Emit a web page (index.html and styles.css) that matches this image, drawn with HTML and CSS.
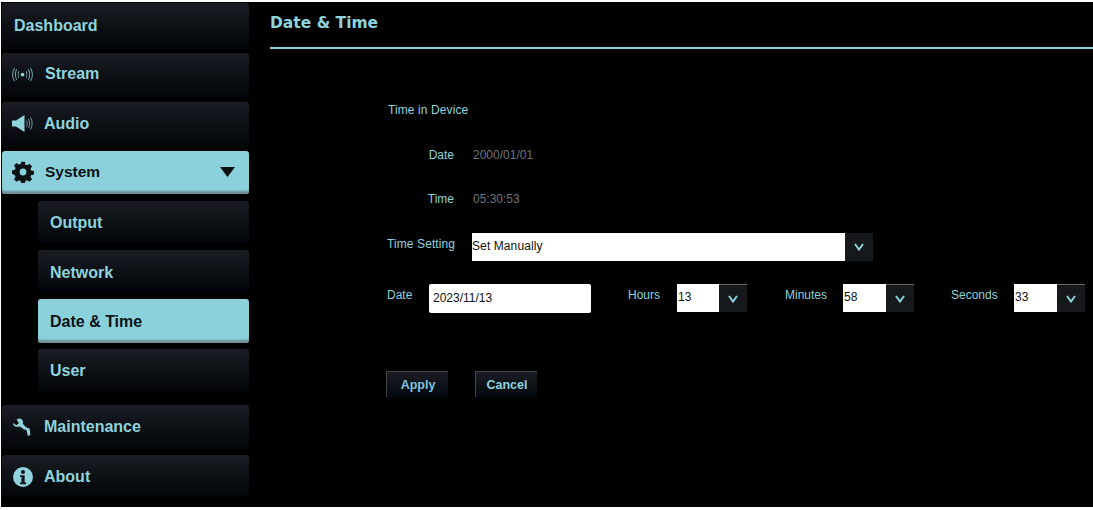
FILE: index.html
```html
<!DOCTYPE html>
<html lang="en">
<head>
<meta charset="utf-8">
<title>Date &amp; Time</title>
<link rel="stylesheet" href="styles.css">
</head>
<body>
<div class="frame">
  <nav class="side">
    <a class="item dash">Dashboard</a>
    <a class="item stream">
      <svg class="ico ico-stream" viewBox="0 0 22 16"><g fill="none" stroke="#6d9fa6" stroke-width="1.100"><path d="M4.800 2.500c-1.800 3.400-1.800 7.600 0 11"/><path d="M2.600 1c-2.800 4.400-2.800 9.600 0 14"/><path d="M7 4.500c-1 2.200-1 4.800 0 7"/><path d="M17.200 2.500c1.800 3.400 1.800 7.600 0 11"/><path d="M19.400 1c2.800 4.400 2.800 9.600 0 14"/><path d="M15 4.500c1 2.200 1 4.800 0 7"/></g><circle cx="11" cy="8" r="2" fill="#8fd3dc"/></svg>
      <span>Stream</span>
    </a>
    <a class="item audio">
      <svg class="ico ico-audio" viewBox="0 0 21 17"><path d="M0 5.500h4L12.500 0v17L4 11.500H0z" fill="#8fd3dc"/><g fill="none" stroke="#6d9fa6" stroke-width="1"><path d="M14.500 5.500c.9 1.900.9 4.100 0 6"/><path d="M16.500 4c1.500 2.800 1.500 6.200 0 9"/><path d="M18.500 2.500c2.100 3.800 2.100 8.200 0 12"/></g></svg>
      <span>Audio</span>
    </a>
    <a class="item on system">
      <svg class="ico ico-gear" viewBox="-1 -1 26 26"><path fill="#0c1114" fill-rule="evenodd" d="M9.800 0h4.400l.6 3.300 2 .8 2.800-1.900 3.100 3.100-1.900 2.800.8 2 3.300.6v4.400l-3.300.6-.8 2 1.900 2.800-3.100 3.100-2.800-1.900-2 .8-.6 3.300H9.800l-.6-3.300-2-.8-2.800 1.900-3.100-3.100 1.900-2.800-.8-2L-.9 14.200V9.800l3.300-.6.8-2-1.900-2.800 3.100-3.100 2.800 1.900 2-.8zM12 8a4 4 0 1 0 0 8 4 4 0 0 0 0-8z"/></svg>
      <span class="grow">System</span>
      <svg class="caret" viewBox="0 0 16 12" preserveAspectRatio="none"><path d="M0 0h16L8 12z" fill="#0c1114"/></svg>
    </a>
    <div class="subs">
      <a class="item sub output">Output</a>
      <a class="item sub network">Network</a>
      <a class="item sub on current">Date &amp; Time</a>
      <a class="item sub user">User</a>
    </div>
    <a class="item maint">
      <svg class="ico ico-wrench" viewBox="0 0 22 22"><path fill="#8fd3dc" d="M0 6.500 3.800 9 6.500 7 4 2.800C6.500.6 10.200 1.500 11 5c.2 1 .1 1.800-.2 2.500l3 3.200c1 1 1.800 1.300 3 1.500 1 .2 1.500.8 1.700 1.800l.5 6-2.800.6-1-5c-.2-.8-.7-1.300-1.500-1.500-1.500-.3-2.600-1-3.700-2.100L7.500 10.500C3.500 11.500 0 10 0 6.500z"/></svg>
      <span>Maintenance</span>
    </a>
    <a class="item about">
      <svg class="ico ico-info" viewBox="0 0 22 22"><circle cx="11" cy="11" r="11" fill="#8fd3dc"/><circle cx="11" cy="5.500" r="2.200" fill="#0a0f14"/><path d="M7.800 9h5v8h1.600v2H7.800v-2h1.600v-6H7.800z" fill="#0a0f14"/></svg>
      <span>About</span>
    </a>
  </nav>
  <main class="main">
    <h1 class="title">Date &amp; Time</h1>
    <form class="form">
      <div class="heading">Time in Device</div>
      <div class="info info-date"><span class="lab">Date</span><span class="val">2000/01/01</span></div>
      <div class="info info-time"><span class="lab">Time</span><span class="val">05:30:53</span></div>
      <div class="row-setting">
        <span class="lab lab-setting">Time Setting</span>
        <div class="select wide"><span class="sel-text">Set Manually</span><span class="arrow"><svg viewBox="0 0 10 8"><path d="M1 1l4 5.500L9 1" fill="none" stroke="#8fd3dc" stroke-width="2"/></svg></span></div>
      </div>
      <div class="row-date">
        <span class="lab lab-date">Date</span>
        <div class="text-box">2023/11/13</div>
        <span class="lab lab-hours">Hours</span>
        <div class="select small hours"><span class="sel-text">13</span><span class="arrow"><svg viewBox="0 0 10 8"><path d="M1 1l4 5.500L9 1" fill="none" stroke="#8fd3dc" stroke-width="2"/></svg></span></div>
        <span class="lab lab-minutes">Minutes</span>
        <div class="select small"><span class="sel-text">58</span><span class="arrow"><svg viewBox="0 0 10 8"><path d="M1 1l4 5.500L9 1" fill="none" stroke="#8fd3dc" stroke-width="2"/></svg></span></div>
        <span class="lab lab-seconds">Seconds</span>
        <div class="select small"><span class="sel-text">33</span><span class="arrow"><svg viewBox="0 0 10 8"><path d="M1 1l4 5.500L9 1" fill="none" stroke="#8fd3dc" stroke-width="2"/></svg></span></div>
      </div>
      <div class="buttons">
        <button type="button" class="btn apply">Apply</button>
        <button type="button" class="btn cancel">Cancel</button>
      </div>
    </form>
  </main>
</div>
</body>
</html>
```
FILE: styles.css
```css
* { box-sizing: border-box; }
html, body { margin: 0; height: 100%; }
body { background: #fff; padding: 2px 0 3px 1px; font-family: "Liberation Sans", Arial, sans-serif; overflow: hidden; }
.frame { display: flex; height: 505px; background: #000; }

.side { width: 248px; flex: none; padding: 1px 0 0 1px; display: flex; flex-direction: column; }
.item {
  display: flex; align-items: center; height: 44px; padding-left: 10px; border-radius: 3px;
  font-size: 16px; font-weight: 700; color: #8fd3dc;
  background: linear-gradient(#1a1e24 0%, #0e1217 45%, #02060b 100%);
}
.ico { flex: none; display: block; }
.dash { height: 46px; padding-left: 12px; }
.stream { margin-top: 4px; height: 44px; padding-bottom: 2px; }
.audio { margin-top: 5px; height: 45px; padding-bottom: 2px; }
.ico-stream { width: 21px; height: 15px; margin-right: 12px; }
.ico-audio { width: 21px; height: 17px; margin-right: 11px; }
.ico-gear { width: 22px; height: 22px; margin-right: 11px; }
.ico-wrench { width: 20px; height: 20px; margin: 0 11px 0 1px; }
.ico-info { width: 20px; height: 20px; margin: 0 11px 0 1px; }
.item.on { color: #0c1114; background: #8bd1db; box-shadow: inset 0 -4px 2px -1px #6f8f96; }
.system { margin-top: 4px; height: 43px; padding-right: 14px; padding-bottom: 2px; font-size: 15.500px; }
.grow { flex: 1; }
.caret { width: 15px; height: 10px; flex: none; }

.subs { padding-left: 36px; display: flex; flex-direction: column; }
.sub { height: 42px; margin-top: 7px; padding-left: 12px; }
.output { padding-top: 2px; }
.network { padding-top: 4px; }
.current { height: 44px; padding-top: 1px; }
.user { margin-top: 6px; padding-top: 2px; }
.maint { margin-top: 14px; }
.about { margin-top: 6px; height: 42px; padding-top: 2px; }

.main { flex: 1; padding-left: 21px; min-width: 0; }
.title {
  margin: 0; height: 47px; padding-top: 12px; border-bottom: 2px solid #8bd1db;
  font: 700 15.500px "DejaVu Sans", sans-serif; color: #8dd3dc;
}
.form { font-size: 12px; color: #8dd3dc; padding-left: 117px; }
.heading { margin-top: 54px; padding-left: 1px; line-height: 14px; letter-spacing: .1px; }
.info { display: flex; margin-top: 31px; line-height: 14px; }
.info-time { margin-top: 30px; }
.lab { display: block; line-height: 14px; }
.val { color: #6e7478; margin-left: 19px; }
.info .lab { width: 67px; text-align: right; }
.row-setting { display: flex; margin-top: 27px; height: 28px; }
.lab-setting { width: 85px; margin-top: 4px; letter-spacing: .1px; }
.select { display: flex; height: 28px; }
.sel-text { flex: 1; background: #fff; color: #111; font-size: 12px; line-height: 26px; letter-spacing: .1px; }
.arrow { background: #15191c; display: flex; align-items: center; justify-content: center; }
.arrow svg { width: 10px; height: 8px; display: block; }
.wide { width: 401px; }
.wide .arrow { width: 28px; }
.small { width: 71px; }
.small.hours { width: 70px; }
.small .arrow { width: 28px; border-top: 1px solid #666; }
.small .sel-text { padding-left: 1px; letter-spacing: 0; }
.row-date { display: flex; margin-top: 23px; height: 29px; }
.lab-date { width: 42px; margin-top: 4px; }
.text-box { width: 162px; height: 29px; background: #fff; border-radius: 2px; color: #111; line-height: 29px; padding-left: 4px; }
.lab-hours { margin: 4px 0 0 37px; width: 49px; }
.lab-minutes { margin: 4px 0 0 38px; width: 58px; }
.lab-seconds { margin: 4px 0 0 37px; width: 63px; }
.buttons { display: flex; margin: 58px 0 0 -1px; gap: 27px; }
.btn {
  height: 26px; padding: 0 0 0 1px; border: 0; border-top: 1px solid #444; border-left: 1px solid #444;
  background: linear-gradient(#1a1e24, #03080e); color: #8dd3dc;
  font: 700 12.500px "Liberation Sans", sans-serif;
}
.apply { width: 62px; color: #7fc3df; }
.cancel { width: 62px; }
```
